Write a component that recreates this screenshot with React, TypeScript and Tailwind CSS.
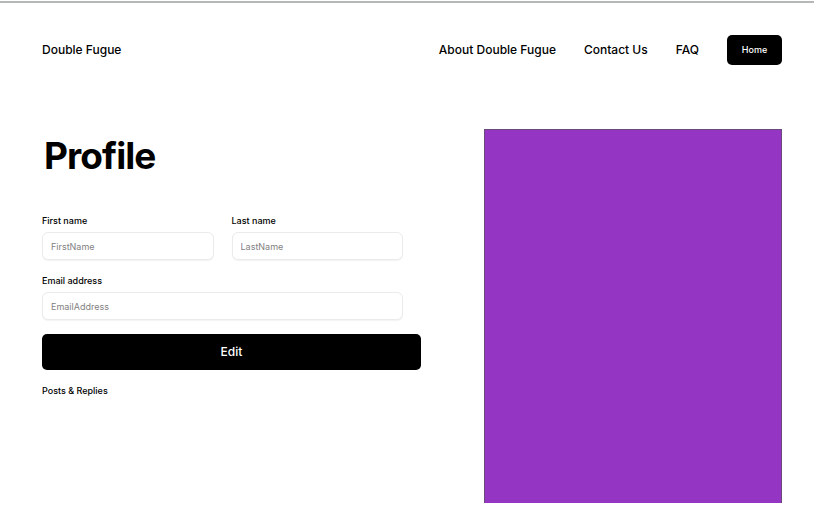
const inputCls =
  "block h-7 w-full rounded-md border border-[#ebebeb] bg-white px-2 text-[9px] text-black placeholder:text-[#828282] shadow-[0_1px_1px_rgba(0,0,0,0.05)] outline-none focus:border-black";

function Field({ id, label, placeholder, type = "text" }: { id: string; label: string; placeholder: string; type?: string }) {
  return (
    <div className="min-w-0 flex-1">
      <label htmlFor={id} className="mb-[3px] block text-[9px] leading-4 font-medium">
        {label}
      </label>
      <input id={id} type={type} placeholder={placeholder} className={inputCls} />
    </div>
  );
}

export default function App() {
  return (
    <div className="bg-white pt-px font-['Inter',sans-serif] text-black">
      <div className="border-t-2 border-[#b5b8b6] pr-8 pl-[42px]">
        <header className="flex items-center justify-between pt-8">
          <a href="#" className="text-xs font-medium">
            Double Fugue
          </a>
          <nav className="flex items-center gap-7 text-xs font-medium">
            <a href="#about">About Double Fugue</a>
            <a href="#contact">Contact Us</a>
            <a href="#faq">FAQ</a>
            <button type="button" className="h-[30px] w-[55px] rounded-[5px] bg-black text-[9px] text-white">
              Home
            </button>
          </nav>
        </header>

        <main className="flex justify-between gap-[63px] pt-16">
          <div className="min-w-0 flex-1">
            <h1 className="pt-[5px] pl-0.5 text-[37px] leading-[44px] font-bold tracking-tight">Profile</h1>
            <form className="pt-[35px]">
              <div className="flex gap-[18px] pr-[18px]">
                <Field id="first-name" label="First name" placeholder="FirstName" />
                <Field id="last-name" label="Last name" placeholder="LastName" />
              </div>
              <div className="flex pt-[13px] pr-[18px]">
                <Field id="email" label="Email address" placeholder="EmailAddress" type="email" />
              </div>
              <button type="button" className="mt-[14px] h-9 w-full rounded-[5px] bg-black text-xs font-medium text-white">
                Edit
              </button>
            </form>
            <h2 className="pt-[13px] text-[9px] leading-4 font-medium">Posts &amp; Replies</h2>
          </div>
          <aside
            aria-label="Profile picture"
            className="h-[374px] w-[298px] border border-b-0 border-[#6a4a7a] bg-[#9435c3]"
          />
        </main>
      </div>
    </div>
  );
}
